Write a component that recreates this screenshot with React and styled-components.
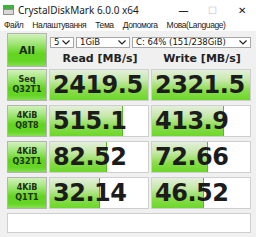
import React from "react";
import styled, { createGlobalStyle } from "styled-components";

const Global = createGlobalStyle`
    html, body {
        margin: 0;
        background: #ffffff;
        font-family: "Noto Sans", "Liberation Sans", sans-serif;
        overflow: hidden;
    }
`;

const rows = [
    { top: "Seq", bottom: "Q32T1", read: "2419.5", write: "2321.5", rw: 100, ww: 100 },
    { top: "4KiB", bottom: "Q8T8", read: "515.1", write: "413.9", rw: 74, ww: 73 },
    { top: "4KiB", bottom: "Q32T1", read: "82.52", write: "72.66", rw: 58, ww: 57 },
    { top: "4KiB", bottom: "Q1T1", read: "32.14", write: "46.52", rw: 51, ww: 53 },
];

const menu = ["Файл", "Налаштування", "Тема", "Допомога", "Мова(Language)"];

const AppIcon = () => (
    <svg width="11" height="10" viewBox="0 0 11 10">
        <rect x="0" y="0" width="11" height="4" fill="#3cb43c" />
        <rect x="0" y="4" width="11" height="6" fill="#d8d8d8" />
        <rect x="0.5" y="4.5" width="10" height="5" fill="none" stroke="#909090" />
    </svg>
);

const Chevron = () => (
    <svg width="8" height="5" viewBox="0 0 8 5">
        <path d="M0.5 0.5 L4 4 L7.5 0.5" fill="none" stroke="#222" strokeWidth="1.2" />
    </svg>
);

const App = () => {
    return (
        <>
            <Global />
            <Window>
                <TitleBar>
                    <AppIcon />
                    <Title>CrystalDiskMark 6.0.0 x64</Title>
                    <Controls>
                        <Ctrl>—</Ctrl>
                        <Ctrl dim>☐</Ctrl>
                        <Ctrl>✕</Ctrl>
                    </Controls>
                </TitleBar>
                <MenuBar>
                    {menu.map((m) => (
                        <MenuItem key={m}>{m}</MenuItem>
                    ))}
                </MenuBar>
                <Body>
                    <Top>
                        <AllButton>All</AllButton>
                        <TopRight>
                            <Selects>
                                <Select w={24}>5<Chevron /></Select>
                                <Select w={54}>1GiB<Chevron /></Select>
                                <Select w={119}>C: 64% (151/238GiB)<Chevron /></Select>
                            </Selects>
                            <Headers>
                                <Header>Read [MB/s]</Header>
                                <Header>Write [MB/s]</Header>
                            </Headers>
                        </TopRight>
                    </Top>
                    <Results>
                        {rows.map((r, i) => (
                            <React.Fragment key={i}>
                                <Label>
                                    <span>{r.top}</span>
                                    <span>{r.bottom}</span>
                                </Label>
                                <Value>
                                    <Bar style={{ width: `${r.rw}%` }} full={r.rw === 100} />
                                    <Num>{r.read}</Num>
                                </Value>
                                <Value>
                                    <Bar style={{ width: `${r.ww}%` }} full={r.ww === 100} />
                                    <Num>{r.write}</Num>
                                </Value>
                            </React.Fragment>
                        ))}
                    </Results>
                    <Status />
                </Body>
            </Window>
        </>
    );
};

const Window = styled.div`
    width: 256px;
    height: 237px;
    display: flex;
    flex-direction: column;
`;

const TitleBar = styled.div`
    height: 18px;
    display: flex;
    align-items: center;
    padding: 2px 0 0 3px;
    box-sizing: border-box;
    background: #ffffff;
`;

const Title = styled.span`
    margin-left: 4px;
    font-size: 10px;
    color: #1a1a1a;
    font-family: "Noto Sans", sans-serif;
`;

const Controls = styled.div`
    margin-left: auto;
    display: flex;
`;

const Ctrl = styled.span`
    width: 29px;
    text-align: center;
    font-size: 10px;
    color: ${(p) => (p.dim ? "#c0c0c0" : "#222")};
`;

const MenuBar = styled.div`
    height: 13px;
    display: flex;
    gap: 9px;
    padding-left: 4px;
    align-items: center;
    background: #ffffff;
`;

const MenuItem = styled.span`
    font-size: 8.5px;
    letter-spacing: -0.4px;
    color: #1a1a1a;
    font-family: "Liberation Sans", sans-serif;
    white-space: nowrap;
`;

const Body = styled.div`
    flex: 1;
    background: #f0f0f0;
    padding: 2px 4px 4px 7px;
    display: flex;
    flex-direction: column;
`;

const Top = styled.div`
    display: flex;
    gap: 2px;
    height: 34px;
`;

const green = `linear-gradient(to bottom, #d2f2bc 0%, #a0e676 30%, #62d41e 62%, #66d626 85%, #86de52 100%)`;

const AllButton = styled.div`
    width: 40px;
    box-sizing: border-box;
    border: 1px solid #b4b4b4;
    background: ${green};
    display: flex;
    align-items: center;
    justify-content: center;
    font-family: "DejaVu Sans", sans-serif;
    font-weight: bold;
    font-size: 11px;
    color: #1a2a10;
`;

const TopRight = styled.div`
    flex: 1;
    display: flex;
    flex-direction: column;
    padding: 4px 0 0 1px;
`;

const Selects = styled.div`
    display: flex;
    gap: 2px;
`;

const Select = styled.div`
    width: ${(p) => p.w}px;
    height: 11px;
    box-sizing: border-box;
    background: #fff;
    border: 1px solid #a8a8a8;
    display: flex;
    align-items: center;
    justify-content: space-between;
    padding: 0 3px 0 3px;
    font-family: "DejaVu Sans", sans-serif;
    font-size: 8.5px;
    color: #111;
    line-height: 1;
    white-space: nowrap;
`;

const Headers = styled.div`
    display: grid;
    grid-template-columns: 100px 100px;
    column-gap: 2px;
    margin-top: 4px;
`;

const Header = styled.div`
    text-align: center;
    font-family: "DejaVu Sans", sans-serif;
    font-weight: bold;
    font-size: 11px;
    color: #222;
`;

const Results = styled.div`
    margin-top: 2px;
    display: grid;
    grid-template-columns: 40px 100px 100px;
    grid-auto-rows: 32px;
    column-gap: 2px;
    row-gap: 4px;
`;

const Label = styled.div`
    box-sizing: border-box;
    border: 1px solid #b4b4b4;
    background: ${green};
    display: flex;
    flex-direction: column;
    align-items: center;
    justify-content: center;
    font-family: "DejaVu Sans", sans-serif;
    font-weight: bold;
    font-size: 8px;
    line-height: 10px;
    color: #1e3014;
`;

const Value = styled.div`
    position: relative;
    box-sizing: border-box;
    border: 1px solid #cfcfcf;
    background: #ffffff;
    overflow: hidden;
    display: flex;
    align-items: center;
`;

const Bar = styled.div`
    position: absolute;
    left: 0;
    top: 0;
    bottom: 0;
    background: linear-gradient(to bottom, #e4efdc 0%, #c4e8a8 35%, #88dc48 70%, #6cd82a 100%);
    border-right: ${(p) => (p.full ? "none" : "1px solid #5cb82c")};
    box-sizing: border-box;
`;

const Num = styled.span`
    position: relative;
    padding-left: 3px;
    font-family: "DejaVu Sans", sans-serif;
    font-weight: bold;
    font-size: 24px;
    letter-spacing: -0.5px;
    color: #1c1c1c;
    line-height: 1;
`;

const Status = styled.div`
    margin-top: 4px;
    height: 20px;
    width: 244px;
    box-sizing: border-box;
    border: 1px solid #cfcfcf;
    background: #ffffff;
`;

export default App;
